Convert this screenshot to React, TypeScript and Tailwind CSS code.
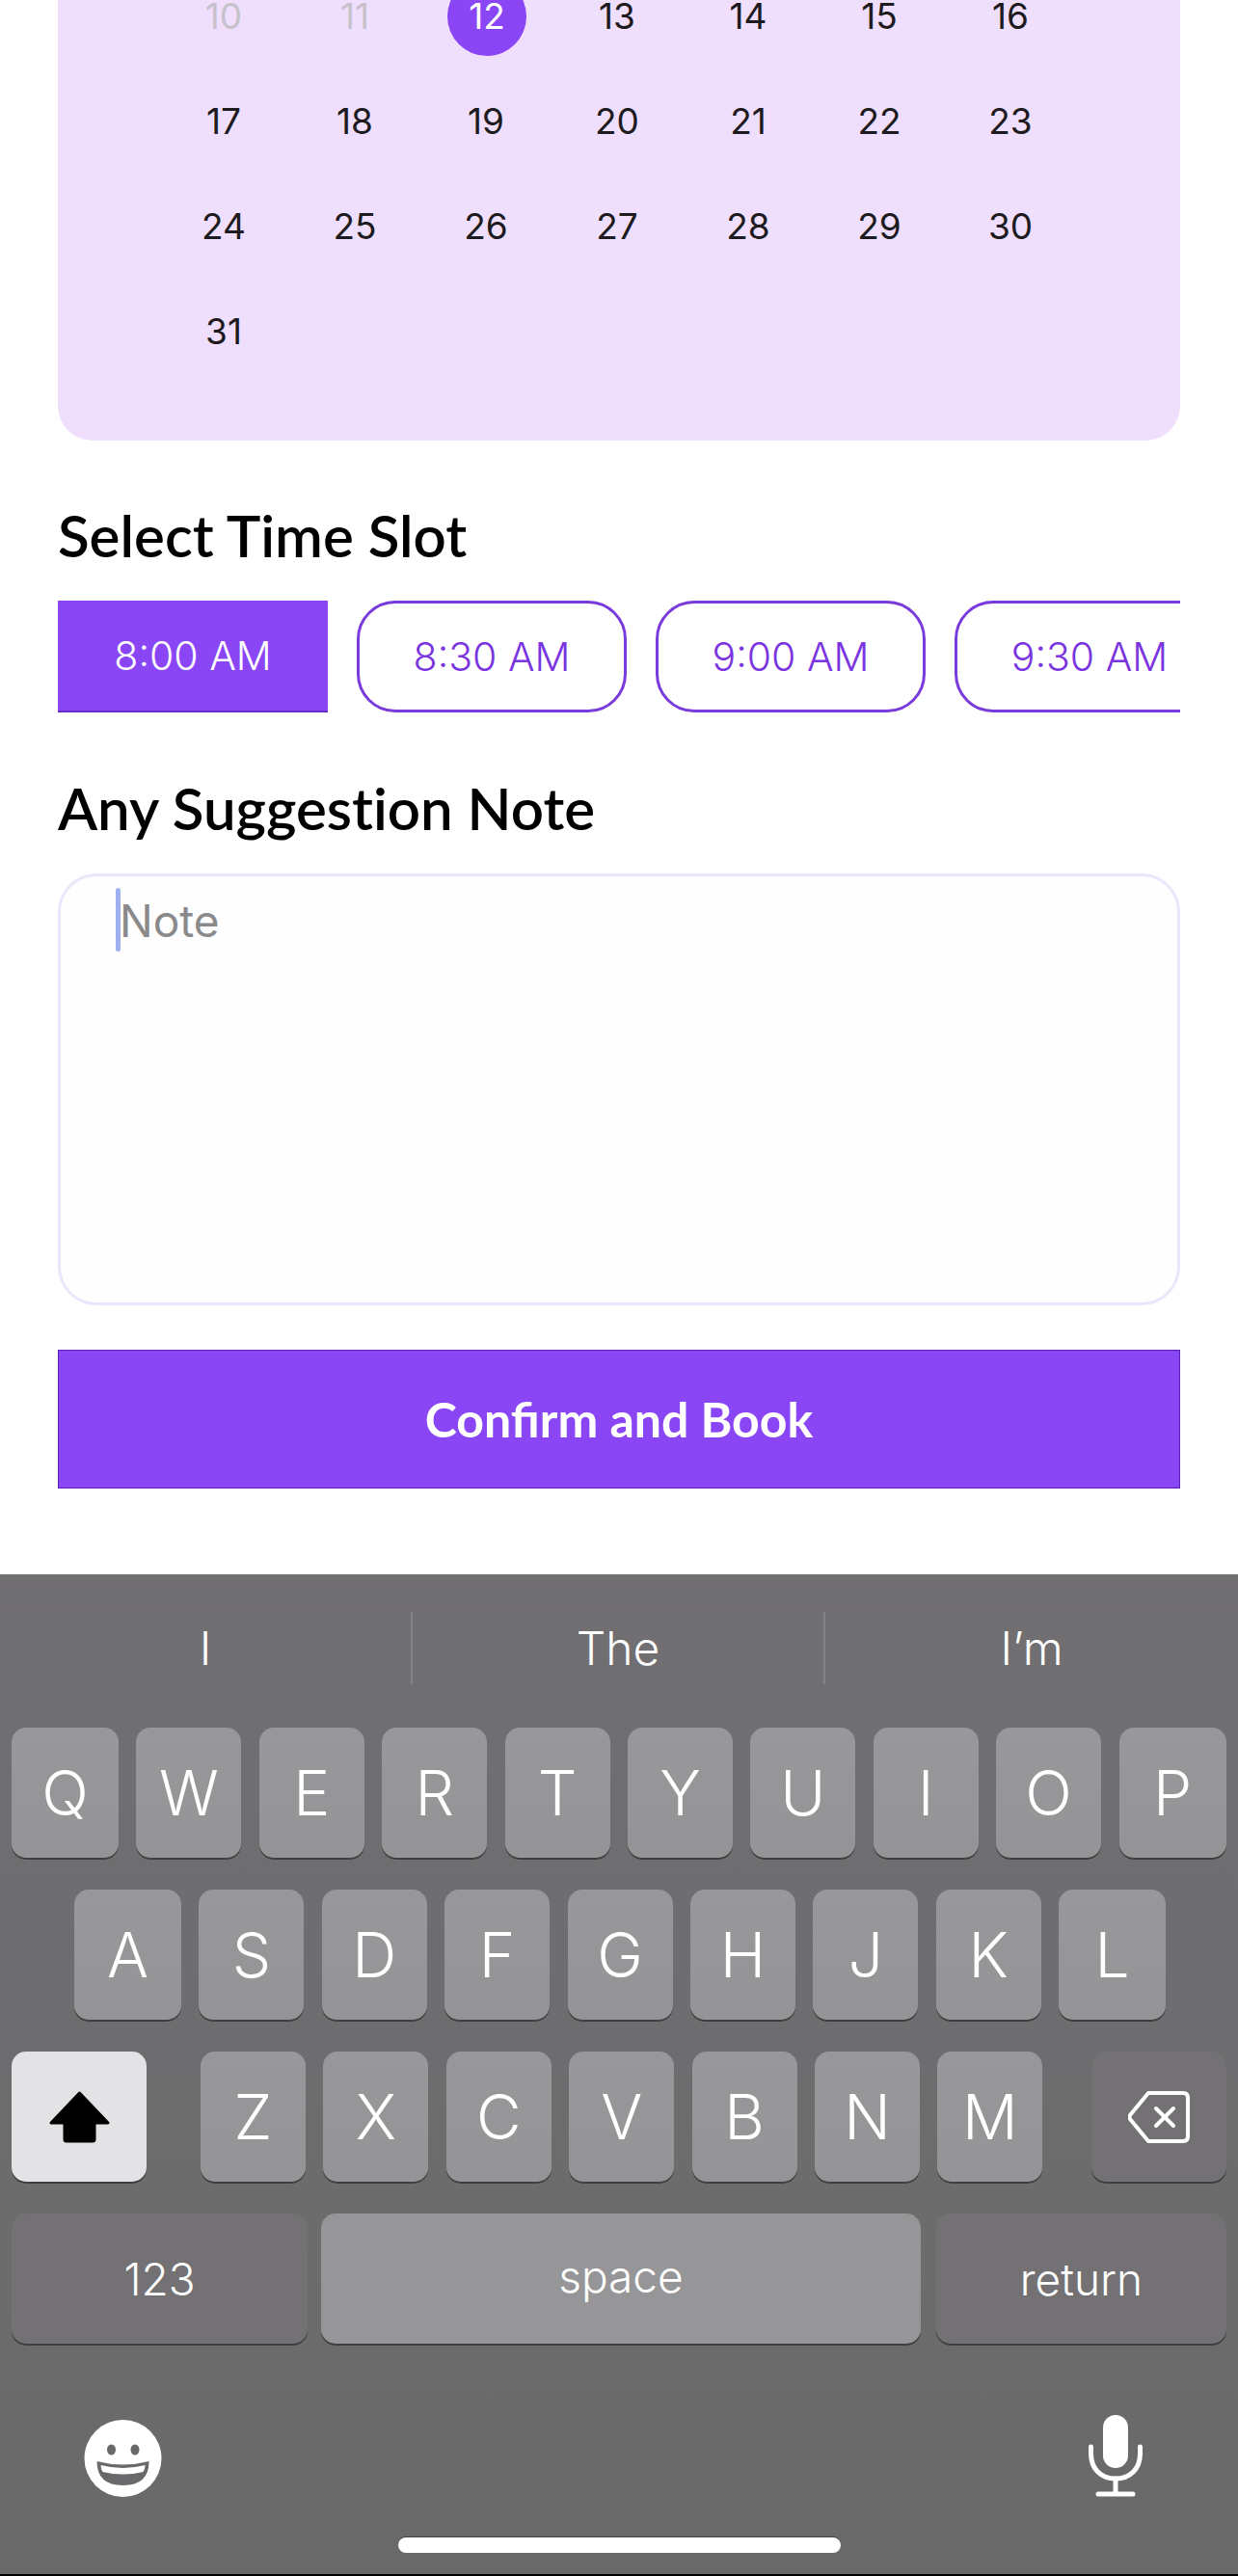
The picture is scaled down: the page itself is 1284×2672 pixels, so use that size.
const rows: { d: string; c: string }[][] = [
  [
    { d: "10", c: "text-[#c6c1ca]" },
    { d: "11", c: "text-[#c6c1ca]" },
    { d: "12", c: "sel" },
    { d: "13", c: "" },
    { d: "14", c: "" },
    { d: "15", c: "" },
    { d: "16", c: "" },
  ],
  ["17", "18", "19", "20", "21", "22", "23"].map((d) => ({ d, c: "" })),
  ["24", "25", "26", "27", "28", "29", "30"].map((d) => ({ d, c: "" })),
  [{ d: "31", c: "" }],
];

function Day({ d, c }: { d: string; c: string }) {
  if (c === "sel") {
    return (
      <div className="h-[109px] flex items-center justify-center">
        <div className="w-[82px] h-[82px] ml-[2px] rounded-full bg-[#8a46f5] flex items-center justify-center text-white">{d}</div>
      </div>
    );
  }
  return <div className={`h-[109px] flex items-center justify-center ${c || "text-[#1d1a20]"}`}>{d}</div>;
}

function Slot({ t, on }: { t: string; on?: boolean }) {
  return on ? (
    <div className="w-[280px] h-[116px] shrink-0 bg-[#8a46f5] border-b-2 border-[#6a2fc8] flex items-center justify-center text-white">{t}</div>
  ) : (
    <div className="w-[280px] h-[116px] shrink-0 rounded-[40px] border-[3px] border-[#7a3bdc] flex items-center justify-center text-[#7a35e0]">{t}</div>
  );
}

const keyBase =
  "h-[135px] rounded-[15px] flex items-center justify-center text-white shadow-[0_2px_0_#3f3e40]";
const letter = `${keyBase} bg-gradient-to-b from-[#98979a] to-[#949395] text-[64px] font-[350]`;

function Key({ k, w }: { k: string; w?: "wide" }) {
  return <div className={`${letter} ${w ? "w-[111px]" : "w-[109px]"}`}>{k}</div>;
}

export default function App() {
  return (
    <div className="w-[1284px] h-[2672px] bg-white flex flex-col overflow-hidden font-['Inter',sans-serif]">
      <div className="mx-[60px] h-[457px] shrink-0 bg-[#efdffd] rounded-b-[36px] pl-[104px] overflow-hidden">
        <div className="-mt-[38px] w-[952px] grid grid-cols-7 text-[37px] leading-none">
          {rows.flat().map((x) => (
            <Day key={x.d} d={x.d} c={x.c} />
          ))}
        </div>
      </div>

      <div className="px-[60px] flex flex-col">
        <h2 className="mt-[56px] h-[84px] text-[60px] leading-[84px] font-semibold text-black font-['Lato',sans-serif] [font-variant-ligatures:none]">Select Time Slot</h2>
        <div className="mt-[26px] flex gap-[30px] overflow-hidden text-[41px] font-[350] leading-none">
          <Slot t="8:00 AM" on />
          <Slot t="8:30 AM" />
          <Slot t="9:00 AM" />
          <Slot t="9:30 AM" />
        </div>
        <h2 className="mt-[57px] h-[84px] text-[60px] leading-[84px] font-semibold text-black font-['Lato',sans-serif] [font-variant-ligatures:none]">Any Suggestion Note</h2>
        <div className="relative mt-[26px] h-[448px] rounded-[40px] border-[3px] border-[#ece5fb] bg-[#fffeff] pl-[61px] pt-[11px] text-[46px] leading-[70px] font-normal text-[#8a8a8c]">
          Note
          <div className="absolute left-[57px] top-[12px] w-[5px] h-[66px] bg-[#9fb0f0] rounded-sm" />
        </div>
        <button className="mt-[46px] h-[144px] bg-[#8a46f5] border border-[#5a25b5] text-white text-[50px] font-bold font-['Lato',sans-serif]">
          Confirm and Book
        </button>
      </div>

      <div className="mt-[89px] flex-1 bg-gradient-to-b from-[#716f72] to-[#6a696a] flex flex-col">
        <div className="h-[159px] shrink-0 flex pb-[45px] pt-[39px] text-white text-[48px] font-light leading-none">
          <div className="w-[426px] flex items-center justify-center">I</div>
          <div className="w-[430px] flex items-center justify-center border-l-2 border-r-2 border-[#858386]">The</div>
          <div className="flex-1 flex items-center justify-center">I’m</div>
        </div>

        <div className="flex flex-col gap-[33px]">
          <div className="flex pl-[12px] gap-[18.4px]">
            <Key k="Q" w="wide" />
            {"WERTYUIO".split("").map((k) => (
              <Key key={k} k={k} />
            ))}
            <Key k="P" w="wide" />
          </div>
          <div className="flex pl-[77px] gap-[18.4px]">
            <Key k="A" w="wide" />
            {"SDFGHJK".split("").map((k) => (
              <Key key={k} k={k} />
            ))}
            <Key k="L" w="wide" />
          </div>
          <div className="flex px-[12px]">
            <div className={`${keyBase} w-[140px] bg-[#e3e2e5] shadow-[0_2px_0_#1c1c1c]`}>
              <svg width="63" height="54" viewBox="0 0 63 54">
                <path d="M31.5 2 L61 33 H47 V50 Q47 52 45 52 H18 Q16 52 16 50 V33 H2 Z" fill="#000" stroke="#000" strokeWidth="3" strokeLinejoin="round" />
              </svg>
            </div>
            <div className="ml-[56px] flex gap-[18.4px]">
              {"ZXCVBNM".split("").map((k) => (
                <Key key={k} k={k} />
              ))}
            </div>
            <div className={`${keyBase} ml-auto w-[140px] bg-[#737174]`}>
              <svg width="64" height="54" viewBox="0 0 64 54" fill="none" stroke="#fff" strokeWidth="4" strokeLinecap="round" strokeLinejoin="round">
                <path d="M21 2 H57 Q62 2 62 7 V47 Q62 52 57 52 H21 L2 29 Q1 27 2 25 Z" />
                <path d="M29 18 L47 36 M47 18 L29 36" />
              </svg>
            </div>
          </div>
          <div className="flex pl-[12px] text-[46px] font-[350] leading-none">
            <div className={`${keyBase} w-[307px] bg-[#737174]`}>123</div>
            <div className={`${keyBase} w-[622px] ml-[14px] bg-[#969597] pb-[6px]`}>space</div>
            <div className={`${keyBase} w-[301px] ml-[16px] bg-[#737174]`}>return</div>
          </div>
        </div>

        <div className="mt-[74px] h-[85px] flex justify-between items-end pl-[87px] pr-[99px]">
          <svg width="81" height="80" viewBox="0 0 80 80">
            <circle cx="40" cy="40" r="40" fill="#fff" />
            <ellipse cx="28" cy="31" rx="4.5" ry="5.5" fill="#69686a" />
            <ellipse cx="52.5" cy="31" rx="4.5" ry="5.5" fill="#69686a" />
            <path d="M13 43 Q40 50 67 43 Q67 68 40 68 Q13 68 13 43 Z" fill="#69686a" />
            <path d="M17 47 Q40 53 63 47 Q63 51 61 54 Q40 59 19 54 Q17 51 17 47 Z" fill="#fff" />
          </svg>
          <svg width="56" height="85" viewBox="0 0 56 85" fill="none" stroke="#fff" strokeWidth="5" strokeLinecap="round">
            <rect x="15" y="0" width="26" height="55" rx="13" fill="#fff" stroke="none" />
            <path d="M2.5 33 V40 C2.5 56 13 66 28 66 C43 66 53.5 56 53.5 40 V33" />
            <path d="M28 66 V82 M10 82 H46" />
          </svg>
        </div>
        <div className="mt-[42px] w-[459px] h-[16px] mx-auto rounded-full bg-white shrink-0 shadow-[0_-1px_0_#444]" />
        <div className="mt-[22px] h-[2px] bg-black shrink-0" />
      </div>
    </div>
  );
}
